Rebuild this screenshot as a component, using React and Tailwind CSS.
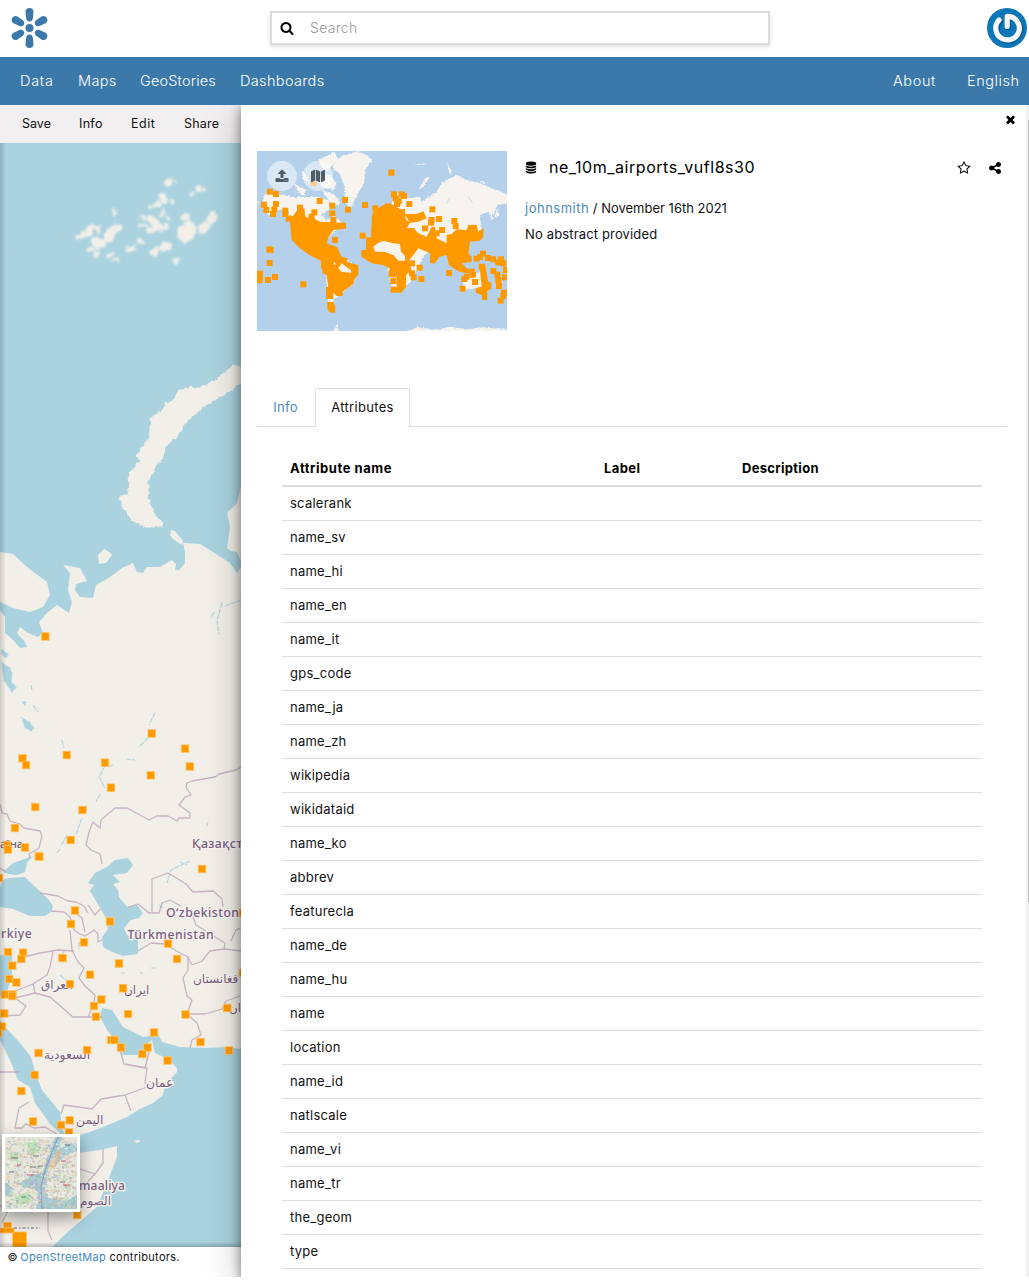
import React from "react";

const ICONS = {
  search:
    "M1216 832q0-185-131.5-316.5t-316.5-131.5-316.5 131.5-131.5 316.5 131.5 316.5 316.5 131.5 316.5-131.5 131.5-316.5zm512 832q0 52-38 90t-90 38q-54 0-90-38l-343-342q-179 124-399 124-143 0-273.5-55.5t-225-150-150-225-55.5-273.5 55.5-273.5 150-225 225-150 273.5-55.5 273.5 55.5 225 150 150 225 55.5 273.5q0 220-124 399l343 343q37 37 37 90z",
  times:
    "M1490 1322q0 40-28 68l-136 136q-28 28-68 28t-68-28l-294-294-294 294q-28 28-68 28t-68-28l-136-136q-28-28-28-68t28-68l294-294-294-294q-28-28-28-68t28-68l136-136q28-28 68-28t68 28l294 294 294-294q28-28 68-28t68 28l136 136q28 28 28 68t-28 68l-294 294 294 294q28 28 28 68z",
  star: "M1201 1004l306-297-422-62-189-382-189 382-422 62 306 297-73 421 378-199 377 199zm527-357q0 22-26 48l-363 354 86 500q1 7 1 20 0 50-41 50-19 0-40-12l-449-236-449 236q-22 12-40 12-21 0-31.5-14.5t-10.5-35.5q0-6 2-20l86-500-364-354q-25-27-25-48 0-37 56-46l502-73 225-455q19-41 49-41t49 41l225 455 502 73q56 9 56 46z",
  share:
    "M1344 1024q133 0 226.5 93.5t93.5 226.5-93.5 226.5-226.5 93.5-226.5-93.5-93.5-226.5q0-12 2-34l-360-180q-92 86-218 86-133 0-226.5-93.5t-93.5-226.5 93.5-226.5 226.5-93.5q126 0 218 86l360-180q-2-22-2-34 0-133 93.5-226.5t226.5-93.5 226.5 93.5 93.5 226.5-93.5 226.5-226.5 93.5q-126 0-218-86l-360 180q2 22 2 34t-2 34l360 180q92-86 218-86z",
  database:
    "M896 768q237 0 443-43t325-127v170q0 69-103 128t-280 93.5-385 34.5-385-34.5-280-93.5-103-128v-170q119 84 325 127t443 43zm0 768q237 0 443-43t325-127v170q0 69-103 128t-280 93.5-385 34.5-385-34.5-280-93.5-103-128v-170q119 84 325 127t443 43zm0-384q237 0 443-43t325-127v170q0 69-103 128t-280 93.5-385 34.5-385-34.5-280-93.5-103-128v-170q119 84 325 127t443 43zm0-1152q208 0 385 34.5t280 93.5 103 128v128q0 69-103 128t-280 93.5-385 34.5-385-34.5-280-93.5-103-128v-128q0-69 103-128t280-93.5 385-34.5z",
  upload:
    "M1344 1472q0-26-19-45t-45-19-45 19-19 45 19 45 45 19 45-19 19-45zm256 0q0-26-19-45t-45-19-45 19-19 45 19 45 45 19 45-19 19-45zm128-224v320q0 40-28 68t-68 28h-1472q-40 0-68-28t-28-68v-320q0-40 28-68t68-28h427q21 56 70.5 92t110.5 36h256q61 0 110.5-36t70.5-92h427q40 0 68 28t28 68zm-325-648q-17 40-59 40h-256v448q0 26-19 45t-45 19h-256q-26 0-45-19t-19-45v-448h-256q-42 0-59-40-17-39 14-69l448-448q18-19 45-19t45 19l448 448q31 30 14 69z",
};

function Icon({ name, className }) {
  return (
    <svg viewBox="0 0 1792 1792" className={className} fill="currentColor">
      <path d={ICONS[name]} />
    </svg>
  );
}

function Logo() {
  return (
    <svg viewBox="0 0 40 42" className="h-[42px] w-[40px]" fill="#3a79aa">
      <circle cx="20.500" cy="21" r="4" />
      {[0, 60, 120, 180, 240, 300].map((a) => (
        <path
          key={a}
          transform={`rotate(${a} 20.5 21)`}
          d="M16.500 4.800C16.500 2.600 18.200 1 20.500 1s4 1.600 4 3.800L23.800 11.400C23.500 13.400 22.200 14.400 20.500 14.400s-3-1-3.300-3Z"
        />
      ))}
    </svg>
  );
}

function Avatar() {
  return (
    <svg viewBox="0 0 40 40" className="h-10 w-10">
      <circle cx="20" cy="20" r="20" fill="#0b76b8" />
      <g fill="none" strokeLinecap="round">
        <path d="M12.300 12.500A11.800 11.800 0 1 0 20.500 8.500V18.500" stroke="#075a91" strokeWidth="5.500" transform="translate(.7 .9)" />
        <path d="M12 12A11.800 11.800 0 1 0 20.200 8.300V18.500" stroke="#f6f6f6" strokeWidth="5.200" strokeLinejoin="round" />
      </g>
    </svg>
  );
}

const MARKERS = [
  [45.300, 636.500], [151.700, 733.500], [185, 748.700], [189.800, 766.500], [150.800, 775.300], [22.500, 758.300], [26, 765], [66.800, 755],
  [105, 762.700], [111, 787.700], [35.200, 807], [82.500, 810], [15, 828], [70.700, 840], [25, 847.500], [7, 845], [8, 849.500],
  [38.500, 856], [39.300, 856.700], [202, 869], [-1, 878], [75, 910.500], [71, 924], [110, 921.500], [84, 942.300], [168, 943.700],
  [8, 952], [23, 952.700], [21.300, 959], [62.500, 958], [12.300, 965.700], [119, 963.500], [177, 959], [90, 974.700], [9.300, 979],
  [16.300, 982.500], [70, 984], [123, 988.300], [5, 994.500], [12.300, 994.500], [12.300, 996], [101.300, 999.500], [94, 1006], [96, 1016.700],
  [128, 1014], [185.500, 1014.500], [227.300, 1008], [4.300, 1013.500], [2, 1026.500], [-2, 1033], [154, 1032.500], [200.500, 1042],
  [111, 1040], [114.300, 1040], [121, 1047.500], [147.500, 1047.500], [142.300, 1054], [229, 1050.500], [167.500, 1060.500],
  [38.500, 1053], [87, 1050], [34.700, 1075], [21.300, 1091], [33, 1121.500], [61, 1125], [69.700, 1120.300], [69, 1132.500],
  [77.300, 1215], [7.500, 1226], [243, 913], [243, 973],
];

const BORDERS = [
  "M0 804L2 813 7 814 10 821 20 824 24 828 40 831 42 836 39 848 29 854 30 858",
  "M40 893L58 896 68 901 76 902 84 906 88 913M51 911L64 912 70 917 74 930 80 934 85 936 94 930 98 934 98 942 102 940",
  "M88 905L95 915 100 909M74 912L82 918 85 932M70 930L72 950 78 962 84 968 79 978 85 986 95 995 94 1003 88 1017",
  "M24 957L40 953 58 950 74 951M53 951L50 967 47 975 33 984 15 991 8 993M33 983L35 993 15 998 26 1006 20 1015 4 1016M35 993L50 997 73 1017 90 1017 102 1017",
  "M102 864L100 854 91 850 86 845 89 832 93 822 100 828 101 820 115 808 127 808 149 820 157 816 168 816 177 821 179 818 190 818 190 813 179 805 185 797 191 795 186 787 187 783 192 781 215 777 219 774 236 770 241 767",
  "M152 913V879L168 873 186 884 193 892 213 891 222 899 223 907M128 907L138 904 149 913H159L162 903 170 900 181 906M192 914L196 925 215 937 225 943 224 949 210 951 202 961 192 965 187 956",
  "M138 951L151 943 165 944 180 953 188 957 188 970 183 978 187 996 192 1000 187 1014 197 1023 201 1035 192 1040 190 1048M187 1014L205 1014 222 1009 226 1001 240 996M224 949L241 951M231 941L236 930 241 928",
  "M119 1046L124 1064 145 1068 150 1048M124 1064L147 1068 145 1083 147 1087 125 1095 101 1099 92 1109 64 1105 61 1114M125 1095L131 1111",
  "M0 1072H19M29 1102L19 1108 15 1128 22 1128 26 1124 34 1128 45 1127 60 1136M80 1169L95 1174 103 1163V1149M95 1174L82 1188M48 1206V1231L52 1240M0 1205L7 1213 2 1222M0 868L6 872",
];

const LABELS = [
  ["Қазақст", 192, 848, 12.300, 0.4],
  ["O‘zbekiston", 166, 916.500, 12.200, 0.5],
  ["Türkmenistan", 127.500, 938.500, 12.200, 0.5],
  ["rkiye", 1, 938, 12.200, 0.5],
  ["аїна", 0, 848, 11.500, 0],
  ["العراق", 41, 989, 12, 0],
  ["ایران", 124, 994, 12, 0],
  ["فغانستان", 193, 983, 12, 0],
  ["ان", 229, 1012, 12, 0],
  ["السعودية", 44, 1059, 12.400, 0],
  ["عمان", 146, 1087, 12.400, 0],
  ["اليمن", 76, 1124, 12.400, 0],
  ["maaliya", 79, 1190, 12, 0.2],
  ["الصوم", 80, 1205, 12, 0],
];

const LAKES = [
  "M22 718L29 722 34 728 31 731 25 727Z", "M2 650L8 654 6 658 1 653Z", "M2 663L10 668 12 674 11 682 16 687 12 692 4 680Z",
  "M22 702L26 702 25 705Z", "M33 705L38 712M31 685L32 690M62 740L64 748M105 766L99 777 105 788M113 765L107 767M155 713L149 725M148 738L139 747M126 759L135 760",
  "M60 849L57 853M67 835L61 846M100 794L96 802M82 818L76 834M190 861L171 870 167 883M180 862L187 865M65 950L62 955M60 975L66 980M79 942L79 949",
  "M159 905L163 908M121 973H125M140 973H143M151 968H156M222 603L217 620 219 635M241 600L225 606M214 612L211 618M208 823L207 826",
];

// Franz Josef Land islands: cx, cy, rx, ry, rotation
const ISLANDS = [
  [170, 182, 5, 3.500, -15], [200, 189, 5, 3, 10], [193, 193, 1.500, 1.500, 0], [163, 198, 6, 3, 40], [158, 204, 5, 3, -30], [172, 202, 2.500, 2, 0],
  [151, 207, 3, 2, 0], [185, 218, 5.500, 4, -35], [212, 217, 4.500, 8, 15], [204, 227, 6.500, 5, -30], [186, 233, 9, 9, -20], [190, 229, 5, 8, 10],
  [155, 223, 11, 4, 42], [153, 230, 6, 3, -20], [144, 227, 5, 2.500, 20], [143, 217, 3, 2, 30], [168, 227, 4, 2.500, 0], [163, 213, 3, 2, -40],
  [165, 247, 7, 5, -35], [155, 252, 4, 6, 10], [131, 249, 5, 4, 0], [141, 241, 4, 3, 30], [175, 260, 3, 3, 0], [116, 229, 6, 4, -40],
  [110, 235, 10, 5, -38], [98, 243, 8, 5, 20], [91, 250, 4, 3, 0], [97, 254, 4, 2.500, -30], [91, 228, 6, 3, -25], [85, 234, 8, 3, -25],
  [79, 236, 4, 2, 0], [98, 229, 2.500, 3, 0], [115, 212, 2.500, 2.500, 0], [110, 255, 3, 2, -40], [116, 260, 4, 2.500, 25], [168, 218, 2.500, 4, -20],
];

function WorldMap() {
  return (
    <svg viewBox="0 143 241 1104" className="block h-[1104px] w-[241px] bg-[#aad3df]">
      <defs>
        <filter id="soft" x="-5%" y="-5%" width="110%" height="110%">
          <feTurbulence type="fractalNoise" baseFrequency="0.16" numOctaves="2" seed="4" result="n" />
          <feDisplacementMap in="SourceGraphic" in2="n" scale="9" xChannelSelector="R" yChannelSelector="G" />
          <feGaussianBlur stdDeviation="0.8" />
        </filter>
        <filter id="coast" x="-5%" y="-5%" width="110%" height="110%">
          <feTurbulence type="fractalNoise" baseFrequency="0.2" numOctaves="2" seed="4" result="n" />
          <feDisplacementMap in="SourceGraphic" in2="n" scale="5" xChannelSelector="R" yChannelSelector="G" />
          <feGaussianBlur stdDeviation="0.3" />
        </filter>
        <linearGradient id="edge" x1="0" x2="1" y1="0" y2="0">
          <stop offset="0" stopOpacity="0.16" />
          <stop offset="1" stopOpacity="0" />
        </linearGradient>
        <linearGradient id="foot" x1="0" x2="0" y1="1" y2="0">
          <stop offset="0" stopOpacity="0.22" />
          <stop offset="1" stopOpacity="0" />
        </linearGradient>
      </defs>
      <g fill="#f2efe9">
        <g filter="url(#soft)">
          {ISLANDS.map(([x, y, rx, ry, r], i) => (
            <ellipse key={i} cx={x} cy={y} rx={rx} ry={ry} transform={`rotate(${r} ${x} ${y})`} />
          ))}
        </g>
        <path
          filter="url(#coast)"
          stroke="#f2efe9"
          strokeWidth="1.200"
          d="M233 365Q240 367 242 371L241 382 230 391 207 404 197 412 189 419 184 424 180 432 165 447 163 456 153 470 148 482 148 498 153 513 162 523 162 527 147 527 135 522 124 509 120 502 121 495 127 495 130 483 128 478 134 468 142 462 137 456 148 440 150 432 152 423 150 419 163 410 166 403 173 400 180 390 187 388 199 387 213 383 222 375Z"
        />
        <path d="M171 530L175 531 183 541 182 545 173 539 170 535ZM104 549L108 551 112 555 106 563 99 564 98 555ZM241 487L237 503 227 513 230 527 227 548 231 551 237 552 241 561ZM0 552L13 554 27 567 47 582 50 595 43 607 30 612 13 608 0 602Z" />
        <path d="M0 610L5 617 5 633 13 640 20 648 27 647 25 642 17 633 20 627 28 633 38 637 43 633 39 622 47 613 57 605 69 613 72 602 68 590 70 573 63 565 80 568 87 581 76 584 75 590 80 597 93 598 96 585 110 577 122 568 133 563 137 572 143 573 147 567 160 567 172 560 176 564 175 570 179 570 185 563 185 552 183 543 200 544 213 552 230 563 237 573 241 567V1049L228 1047 205 1048 180 1047 162 1042 157 1032 150 1036 143 1037 123 1027 112 1010 102 1008 100 1017 107 1030 118 1043 123 1055 140 1055 147 1044 152 1040 155 1053 168 1059 177 1068 177 1072 165 1085 163 1095 153 1103 140 1109 127 1117 108 1125 90 1132 80 1135 78 1153 100 1150 117 1146 117 1157 107 1183 97 1207 70 1230 52 1247H0Z" />
        <path d="M134 1141L138 1140 141 1141 137 1143Z" />
      </g>
      <g fill="#aad3df">
        <path d="M0 887L3 880 8 878 25 877 30 882 48 899 53 906 51 912 45 916 30 916 13 909 0 907ZM3 872L13 863 33 856 27 863 25 872 17 875 8 874ZM115 860L128 858 133 865 127 873 113 875 120 882 113 884 118 890 119 897 127 907 137 905 143 913 139 918 131 920 124 928 127 935 138 940 138 954 123 956 112 952 103 947 102 937 108 929 106 918 99 906 90 891 94 885 88 883 95 873 107 867ZM0 955L12 956 12 973 7 993 0 997Z" />
        <path d="M0 1020L8 1030 20 1043 31 1057 36 1075 42 1090 60 1112 62 1128 66 1137 78 1137V1153L66 1150 60 1133 50 1124 35 1103 30 1087 18 1080 10 1060 0 1040Z" />
      </g>
      {LAKES.map((d, i) => (
        <path key={i} d={d} fill={i < 4 ? "#aad3df" : "none"} stroke="#b3d6df" strokeWidth="1.200" strokeDasharray="5 1" />
      ))}
      <g fill="none" stroke="#b9a0b5" strokeOpacity=".75" strokeWidth="1.300" strokeLinejoin="round">
        {BORDERS.map((d, i) => (
          <path key={i} d={d} />
        ))}
      </g>
      <g
        fill="#785f7e"
        stroke="#f7f3ef"
        strokeWidth="2.500"
        paintOrder="stroke"
        fontWeight="500"
        className="[font-family:'Noto_Sans','DejaVu_Sans',sans-serif]"
      >
        {LABELS.map(([t, x, y, size, spacing]) => (
          <text key={t} x={x} y={y} fontSize={size} letterSpacing={spacing}>
            {t}
          </text>
        ))}
      </g>
      <g fill="#ff9900" stroke="#ffc56c" strokeWidth=".8">
        {MARKERS.map(([x, y], i) => (
          <rect key={i} x={x - 3.800} y={y - 3.800} width="7.600" height="7.600" />
        ))}
        <rect x="12.500" y="1232" width="14" height="15" />
        <rect x="0" y="1228" width="14" height="5" />
      </g>
      <path d="M14 1228H40" stroke="#785f7e" strokeWidth="1" strokeDasharray="3 2 1.500 2" />
      <rect x="0" y="143" width="6" height="1104" fill="url(#edge)" />
      <rect x="0" y="1242" width="241" height="5" fill="url(#foot)" />
    </svg>
  );
}

const rand = (i) => {
  const v = Math.sin(i * 127.1 + 11.7) * 43758.5453;
  return v - Math.floor(v);
};

const SPECK = ["#7fcf8d", "#e8a9a0", "#9aa6dc", "#f6d79b", "#ffffff", "#8fb5bd", "#d3899a", "#a4dba0", "#a9aeb6"];

function BaseMapThumb() {
  return (
    <svg viewBox="0 0 72 72" className="block h-[72px] w-[72px] bg-[#e6e5da]">
      <path d="M50 0H58L48 20 42 36 40 50 42 72H31L34 58 36 40 42 22ZM14 47L26 38 36 36 35 58 30 52 18 50ZM50 14L66 6 72 10V14L58 20 50 30ZM40 60L62 64 72 58V72H36ZM0 46L10 52 0 60Z" fill="#a9cbd2" />
      <path d="M22 6L32 4 34 14 26 20ZM10 60L24 54 26 64 12 70ZM4 18L14 16 12 26Z" fill="#bfe3b8" />
      {Array.from({ length: 1000 }, (_, i) => (
        <rect
          key={i}
          x={rand(i) * 72}
          y={rand(i + 1900) * 72}
          width={0.8 + rand(i + 300) * 2.2}
          height={0.7 + rand(i + 500) * 0.9}
          fill={SPECK[i % 9]}
          opacity=".55"
          transform={`rotate(${(i % 5) * 22 - 40} ${rand(i) * 72} ${rand(i + 1900) * 72})`}
        />
      ))}
      <path d="M53 12L56 17 50 30 45 34 46 26Z" fill="#efb98f" opacity=".6" />
      <path d="M53 0L46 18 40 34 36 50 37 72" fill="none" stroke="#8792ce" strokeWidth=".9" />
      <path d="M6 21H13M28 19H34M33 29H38M4 35H9M16 60H21M60 8H65M55 45H60M25 30H31" stroke="#4b4b50" strokeWidth=".7" />
      <path d="M22 38H29M56 24H61M58 48H65M12 28H16" stroke="#d0566a" strokeWidth=".9" />
    </svg>
  );
}

const THUMB_POINTS = [
  [424, 98], [60, 155], [78, 162], [42, 194], [49, 210], [78, 192], [73, 208], [69, 222], [106, 212], [106, 222], [150, 203], [155, 214], [116, 236],
  [209, 183], [193, 217], [185, 230], [247, 197], [247, 220], [250, 240], [285, 180], [294, 209], [345, 195], [376, 205], [279, 257], [255, 300], [338, 287],
  [58, 328], [62, 330], [59, 369], [54, 420], [75, 411], [30, 401], [30, 411], [28, 421], [160, 433], [478, 192], [547, 208], [567, 237], [545, 240],
  [543, 248], [576, 270], [525, 265], [613, 243], [617, 258], [560, 280], [509, 383], [514, 417], [491, 412], [486, 400], [597, 399], [638, 446], [675, 426],
  [643, 417], [650, 410], [730, 393], [742, 404], [745, 420], [747, 438], [768, 390], [765, 412], [762, 458], [760, 468], [752, 482], [699, 341],
  [680, 356], [690, 351], [714, 354], [730, 358], [745, 367], [753, 358], [760, 370], [695, 380], [666, 395], [669, 405], [433, 400], [425, 400], [430, 423],
  [222, 376], [245, 383], [486, 370], [415, 199], [432, 163], [437, 175], [441, 192], [455, 163], [462, 168], [446, 184], [485, 273],
];

function Thumbnail() {
  return (
    <svg viewBox="21 33 750 540" className="block h-[180px] w-[250px] bg-[#b5d0eb]">
      <defs>
        <filter id="rough" x="-5%" y="-5%" width="110%" height="110%">
          <feTurbulence type="fractalNoise" baseFrequency="0.16" numOctaves="2" seed="8" result="n" />
          <feDisplacementMap in="SourceGraphic" in2="n" scale="10" xChannelSelector="R" yChannelSelector="G" />
        </filter>
      </defs>
      <g fill="#f7f4ef" filter="url(#rough)">
        <path d="M250 75L262 55 290 45 320 34 350 45 367 60 345 90 342 130 318 170 302 205 283 180 285 140 268 100 248 85Z" />
        <path d="M205 60L255 35 262 60 230 95 215 80ZM190 100L240 105 260 130 250 150 215 140ZM130 130L170 150 160 168 145 155ZM155 90L180 125 160 120Z" />
        <path d="M40 165L75 160 130 172 200 170 235 180 240 205 215 225 230 240 250 225 275 250 230 300 200 320 150 310 115 240 95 205 60 230 38 205Z" />
        <path d="M215 150L255 165 270 190 250 200 235 180Z" />
        <path d="M225 355L290 360 325 385 310 430 250 480 245 515 235 500Z" />
        <path d="M360 300L385 220 430 185 435 155 480 175 510 170 515 185 560 155 575 130 620 105 650 120 690 130 775 165V190L740 195 725 240 715 215 690 225 695 270 650 300 640 350 600 350 560 310 520 350 480 430 450 450 425 440 410 370 350 350Z" />
        <path d="M640 420L690 395 715 420 710 460 670 445 640 450ZM505 150L525 115 540 110 520 140ZM590 65L605 95 600 105ZM685 120L710 128 700 132ZM730 240L742 205 745 225ZM490 75L530 68 520 74Z" />
        <path d="M470 573L505 562 560 570 600 560 650 568 700 562 775 570V590H470ZM250 573L265 548 262 573Z" />
        <path d="M21 183L30 187 21 190Z" />
      </g>
      <path d="M590 190L600 172M655 170L668 190M478 232L486 250" stroke="#cfdbe8" strokeWidth="3" fill="none" />
      <g fill="#ff9900">
        <path d="M108 227H130L145 205 160 208 168 232 190 235 210 245 253 247 285 250V266L250 270 235 293 230 310 262 322 274 350 292 355V366L325 376V404L315 415 310 432 278 455V468H260L250 458V477H228V440H235L230 405 218 400 215 374 213 362 178 345 150 325 125 300 120 245Z" />
        <path d="M232 486H250L256 500V518H240L232 505Z" />
        <path d="M365 250L365 232 370 215 385 205 405 192H424L450 207H465V222L500 222 520 214 530 235 505 245 480 248 470 265 490 265 505 280 530 290 545 260 555 260 560 295 590 310V285L605 282 620 268 650 270 655 254 680 255 685 275 700 264V290L690 302 660 305 655 340 665 350V366L635 370 650 385 665 390 672 405 655 400 630 396 615 388 597 376 590 345 568 350 555 370H540V340L505 325 490 345 478 360 484 392 468 405V440L455 458H422V440H440V412H418V385L398 375 365 370 334 350V330H348V292H362Z" />
        <path d="M688 372H705L710 400 715 425 724 428V446L712 452V480H696V465L677 458V444L695 440Z" />
        {THUMB_POINTS.map(([x, y], i) => (
          <rect key={i} x={x - 9} y={y - 9} width="18" height="18" />
        ))}
      </g>
      <path d="M370 320L385 308 400 303 430 310 450 312 453 335 465 348V362H445L430 345 405 336 375 335ZM265 385L275 370 290 382 303 390V398L275 396ZM255 365L257 375 250 372ZM644 435L665 415 685 410 693 430 680 440 650 446ZM466 225L478 246 468 240Z" fill="#f7f4ef" />
      <path d="M666 417H684V435H666ZM183 124H199V138H183Z" fill="#ff9900" />
    </svg>
  );
}

function RoundButton({ children }) {
  return (
    <span className="flex h-[30px] w-[30px] items-center justify-center rounded-full bg-white/50 text-[#4f5c69]">{children}</span>
  );
}

const ROWS = [
  "scalerank", "name_sv", "name_hi", "name_en", "name_it", "gps_code", "name_ja", "name_zh", "wikipedia", "wikidataid", "name_ko", "abbrev",
  "featurecla", "name_de", "name_hu", "name", "location", "name_id", "natlscale", "name_vi", "name_tr", "the_geom", "type",
];

export default function App() {
  return (
    <div className="flex h-[1277px] w-[1029px] flex-col overflow-hidden bg-white text-[13px] text-[#111] [font-family:Inter,'Open_Sans',sans-serif]">
      <header className="flex h-[57px] shrink-0 items-center pb-[1px] pl-[9px] pr-[2px]">
        <Logo />
        <div className="ml-[221px] flex h-[34px] w-[500px] items-center border-2 border-[#dcdcdc] bg-white pl-2 shadow-[0_2px_4px_rgba(0,0,0,0.12)]">
          <Icon name="search" className="h-[14px] w-[14px] text-black" />
          <span className="-mt-[2px] ml-4 text-[14px] font-light tracking-[0.3px] text-[#999]">Search</span>
        </div>
        <div className="ml-auto">
          <Avatar />
        </div>
      </header>

      <nav className="flex h-12 shrink-0 items-center bg-[#3a79aa] pl-5 pr-[10px] text-[14.5px] font-light tracking-[0.35px] text-white">
        <span className="w-[58px] tracking-[0.7px]">Data</span>
        <span className="w-[62px]">Maps</span>
        <span className="w-[100px] tracking-[0.15px]">GeoStories</span>
        <span>Dashboards</span>
        <span className="ml-auto w-[74px] tracking-[0.6px]">About</span>
        <span className="w-[52px] tracking-[0.55px]">English</span>
      </nav>

      <div className="flex min-h-0 flex-1 overflow-hidden">
        <aside className="relative flex w-[241px] shrink-0 flex-col">
          <div className="flex h-[38px] shrink-0 items-center bg-[#f1eff0] pl-[22px] text-[12.500px]">
            <span className="w-[57px]">Save</span>
            <span className="w-[52px] tracking-[0.3px]">Info</span>
            <span className="w-[53px] tracking-[0.5px]">Edit</span>
            <span className="tracking-[0.2px]">Share</span>
          </div>
          <WorldMap />
          <div className="flex h-[30px] items-start bg-white pl-[7.5px] pt-[2px] text-[11px] leading-[17px] tracking-[0.3px]">
            <span>
              ©<span className="-ml-[1px] text-[#3f86bd]"> OpenStreetMap</span> contributors.
            </span>
          </div>
          <div className="absolute bottom-[65px] left-[2px] border-[3px] border-white shadow-[0_6px_16px_rgba(0,0,0,0.4)]">
            <BaseMapThumb />
          </div>
        </aside>

        <main className="relative flex w-[785px] shrink-0 flex-col bg-white shadow-[-1px_3px_10px_rgba(0,0,0,0.4),-1px_8px_36px_rgba(0,0,0,0.22)] [clip-path:inset(0_0_0_-60px)]">
          <div className="flex h-[46px] shrink-0 justify-end pr-[9px] pt-[8px]">
            <Icon name="times" className="h-[13px] w-[13px] text-black" />
          </div>

          <section className="flex h-[237px] shrink-0 pl-4">
            <div className="relative h-[180px] w-[250px]">
              <Thumbnail />
              <div className="absolute left-[10px] top-[10px] flex gap-[6px]">
                <RoundButton>
                  <Icon name="upload" className="h-[14px] w-[14px]" />
                </RoundButton>
                <RoundButton>
                  <svg viewBox="0 0 16 16" className="h-4 w-4" fill="currentColor">
                    <path d="M1 3.500L5 1.500V12.500L1 14.500ZM5.800 1.500L10.200 3.500V14.500L5.800 12.500ZM11 3.500L15 1.500V12.500L11 14.500Z" />
                  </svg>
                </RoundButton>
              </div>
            </div>
            <div className="ml-[18px] flex flex-1 flex-col">
              <div className="flex h-[33px] items-center pr-6 text-black">
                <Icon name="database" className="h-[13px] w-[12px]" />
                <h1 className="-mt-[2px] ml-[12px] text-[16px] font-normal tracking-[0.54px]">ne_10m_airports_vufl8s30</h1>
                <Icon name="star" className="ml-auto mr-[17px] h-[14px] w-[14px]" />
                <Icon name="share" className="h-[14px] w-[14px]" />
              </div>
              <p className="mt-[15px] leading-[18px]">
                <span className="tracking-[0.5px] text-[#4a8cc2]">johnsmith</span>
                <span> / November 16th 2021</span>
              </p>
              <p className="mt-2 leading-[18px] tracking-[0.15px]">No abstract provided</p>
            </div>
          </section>

          <div className="ml-4 flex h-[39px] w-[750px] shrink-0 border-b border-[#ddd] tracking-[0.3px]">
            <span className="flex w-[57px] items-center justify-center pt-[1px] text-[#4a8cc2]">Info</span>
            <span className="-mb-px ml-[1px] flex w-[95px] items-center justify-center rounded-t-[2px] border border-b-0 border-[#ddd] bg-white">
              Attributes
            </span>
          </div>

          <table className="ml-[41px] mt-[23px] w-[700px] table-fixed border-separate border-spacing-0 text-left">
            <thead>
              <tr className="h-[37px] text-black">
                <th className="w-[314px] border-b-2 border-[#ddd] pb-0 pl-2 pt-[2px] font-bold tracking-[0.55px]">Attribute name</th>
                <th className="w-[138px] border-b-2 border-[#ddd] pb-0 pl-2 pt-[2px] font-bold tracking-[0.4px]">Label</th>
                <th className="border-b-2 border-[#ddd] pb-0 pl-2 pt-[2px] font-bold tracking-[0.3px]">Description</th>
              </tr>
            </thead>
            <tbody>
              {ROWS.map((r) => (
                <tr key={r} className="h-[34px] tracking-[0.25px]">
                  <td className="border-b border-[#ddd] py-0 pl-2">{r}</td>
                  <td className="border-b border-[#ddd]" />
                  <td className="border-b border-[#ddd]" />
                </tr>
              ))}
            </tbody>
          </table>
        </main>
        <div className="flex-1 bg-[#f1f1f1] pl-[2px] pt-[15px]">
          <div className="h-[782px] bg-[#c1c1c1]" />
        </div>
      </div>
    </div>
  );
}
